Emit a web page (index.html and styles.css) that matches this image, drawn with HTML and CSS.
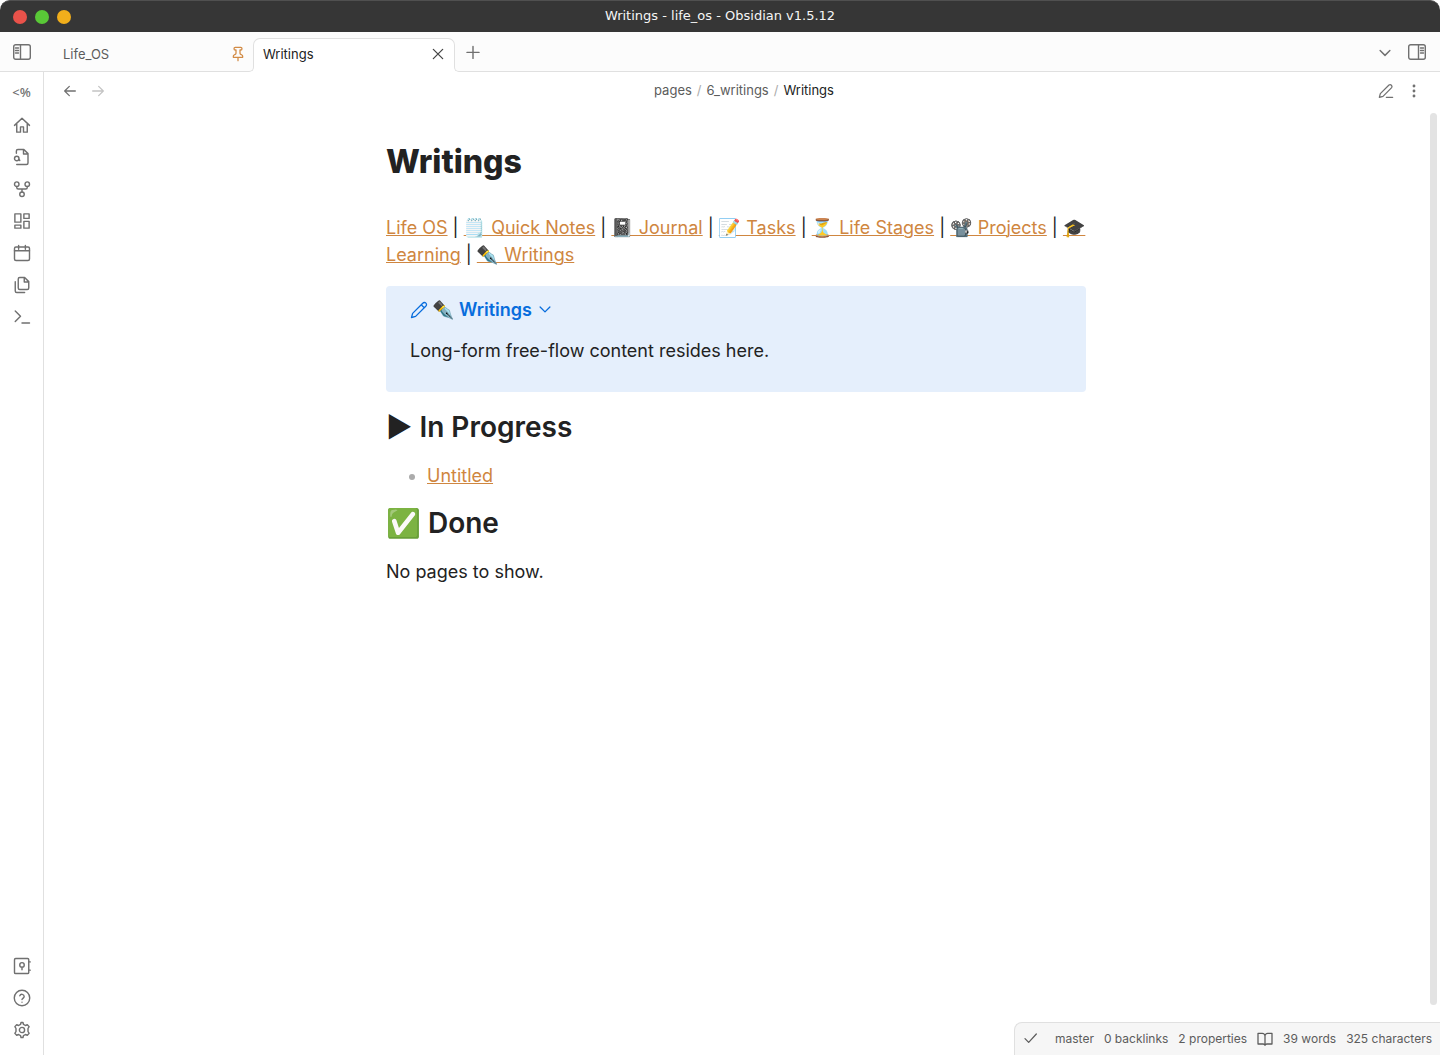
FILE: index.html
```html
<!DOCTYPE html>
<html lang="en">
<head>
<meta charset="utf-8">
<meta name="viewport" content="width=device-width, initial-scale=1">
<title>Writings - life_os - Obsidian v1.5.12</title>
<link rel="stylesheet" href="styles.css">
</head>
<body>
<div class="window">
  <header class="titlebar">
    <div class="window-buttons">
      <button class="dot dot-close" aria-label="Close"></button>
      <button class="dot dot-min" aria-label="Minimize"></button>
      <button class="dot dot-max" aria-label="Maximize"></button>
    </div>
    <div class="window-title">Writings - life_os - Obsidian v1.5.12</div>
  </header>

  <div class="tabbar">
    <button class="icon-button toggle-left" aria-label="Toggle left sidebar">
      <svg class="icon-panel" viewBox="0 0 18 16"><rect x=".7" y=".7" width="16.6" height="14.6" rx="2"/><path d="M7.500 1v14M2.500 4H5.500M2.500 6.500H5.500M2.500 9H5.500"/></svg>
    </button>
    <div class="tabs" role="tablist">
      <div class="tab" role="tab">
        <span class="tab-title">Life_OS</span>
        <button class="icon-button pin" aria-label="Unpin">
          <svg class="icon-small" viewBox="0 0 24 24"><path d="M12 17v5M5 17h14v-1.760a2 2 0 0 0-1.110-1.790l-1.780-.9A2 2 0 0 1 15 10.760V6h1a2 2 0 0 0 0-4H8a2 2 0 0 0 0 4h1v4.760a2 2 0 0 1-1.110 1.790l-1.780.9A2 2 0 0 0 5 15.240Z"/></svg>
        </button>
      </div>
      <div class="tab active" role="tab" aria-selected="true">
        <span class="tab-title">Writings</span>
        <button class="icon-button close" aria-label="Close tab">
          <svg class="icon-small" viewBox="0 0 24 24"><path d="M19 5 5 19M5 5l14 14"/></svg>
        </button>
      </div>
    </div>
    <button class="icon-button new-tab" aria-label="New tab">
      <svg class="icon" viewBox="0 0 24 24"><path d="M12 4.500v16M4 12.500h16"/></svg>
    </button>
    <div class="tabbar-end">
      <button class="icon-button" aria-label="Tab list">
        <svg class="icon" viewBox="0 0 24 24"><path d="m5.500 10 6.500 6.500 6.500-6.500"/></svg>
      </button>
      <button class="icon-button" aria-label="Toggle right sidebar">
        <svg class="icon-panel" viewBox="0 0 18 16"><rect x=".7" y=".7" width="16.6" height="14.6" rx="2"/><path d="M10.500 1v14M12.500 4H15.500M12.500 6.500H15.500M12.500 9H15.500"/></svg>
      </button>
    </div>
  </div>

  <div class="workspace">
    <nav class="ribbon" aria-label="Ribbon">
      <div class="ribbon-group">
        <button class="icon-button templater" aria-label="Templater">&lt;%</button>
        <button class="icon-button" aria-label="Home"><svg class="icon" viewBox="0 0 24 24"><path d="M2 12.500 12 3l10 9.500M5 11v10.500h5v-7h4v7h5V11"/></svg></button>
        <button class="icon-button" aria-label="Quick switcher"><svg class="icon" viewBox="0 0 24 24"><path d="M14 2v6h6M4.500 7V4a2 2 0 0 1 2-2H14.500L20 7.500V20a2 2 0 0 1-2 2H5M9 16.500 7.500 15"/><circle cx="5" cy="14" r="3"/></svg></button>
        <button class="icon-button" aria-label="Graph view"><svg class="icon" viewBox="0 0 24 24"><circle cx="12" cy="19" r="3"/><circle cx="5" cy="5.500" r="3"/><circle cx="19" cy="5.500" r="3"/><path d="M19 8.500v1.500a2 2 0 0 1-2 2H7a2 2 0 0 1-2-2V8.500M12 12v4"/></svg></button>
        <button class="icon-button" aria-label="Canvas"><svg class="icon" viewBox="0 0 24 24"><path d="M2.500 2.500h8v11h-8ZM14.500 2.500h7v6h-7ZM14.500 12.500h7v9h-7ZM2.500 17.500h8v4h-8Z"/></svg></button>
        <button class="icon-button" aria-label="Daily note"><svg class="icon" viewBox="0 0 24 24"><rect x="2" y="4" width="20" height="18" rx="2"/><path d="M7.500 2v5M16.500 2v5M2 9h20"/></svg></button>
        <button class="icon-button" aria-label="Insert template"><svg class="icon" viewBox="0 0 24 24"><path d="M15.500 2H9a2 2 0 0 0-2 2v12a2 2 0 0 0 2 2h10a2 2 0 0 0 2-2V7.500ZM15 2v6h6M3 7.500V20a2 2 0 0 0 2 2h10.500"/></svg></button>
        <button class="icon-button" aria-label="Command palette"><svg class="icon" viewBox="0 0 24 24"><path d="m3 18 7-7-7-7M12 20h10"/></svg></button>
      </div>
      <div class="ribbon-group">
        <button class="icon-button" aria-label="Open vault"><svg class="icon" viewBox="0 0 24 24"><rect x="2" y="2" width="19" height="20" rx="1.500"/><circle cx="12" cy="10.500" r="3"/><path d="M12 13.500V17M21 6.500h2M21 17.500h2"/></svg></button>
        <button class="icon-button" aria-label="Help"><svg class="icon" viewBox="0 0 24 24"><circle cx="12" cy="12" r="10.300"/><path d="M9.100 9a3 3 0 0 1 5.800 1c0 2-2.900 2.700-2.900 4M12 17.500h.01"/></svg></button>
        <button class="icon-button" aria-label="Settings"><svg class="icon" viewBox="0 0 24 24"><path d="M14 4.600 13.300 2h-2.600L10 4.600 7.500 6 4.900 5 2.500 7.500 4 10v4l-1.500 2.500L4.900 19l2.600-1 2.500 1.400.7 2.600h2.600l.7-2.600 2.500-1.400 2.600 1 2.400-2.500L20 14v-4l1.500-2.500L19.100 5l-2.600 1Z"/><circle cx="12" cy="12" r="3.500"/></svg></button>
      </div>
    </nav>

    <main class="leaf">
      <div class="view-header">
        <div class="view-nav">
          <button class="icon-button" aria-label="Back"><svg class="icon-small" viewBox="0 0 24 24"><path d="m11 19-7-7 7-7M20 12H4"/></svg></button>
          <button class="icon-button disabled" aria-label="Forward"><svg class="icon-small" viewBox="0 0 24 24"><path d="m13 5 7 7-7 7M4 12h16"/></svg></button>
        </div>
        <div class="breadcrumb">
          <span>pages</span><span class="slash">/</span><span>6_writings</span><span class="slash">/</span><span class="current">Writings</span>
        </div>
        <div class="view-actions">
          <button class="icon-button" aria-label="Edit"><svg class="icon-small" viewBox="0 0 24 24"><path d="M12.500 21.500H22M16.500 3a2.900 2.900 0 0 1 4 4L7.500 20 2 21.500 3.500 16Z"/></svg></button>
          <button class="icon-button" aria-label="More options"><svg class="icon-small dots" viewBox="0 0 24 24"><circle cx="12" cy="4.500" r="1.200"/><circle cx="12" cy="12" r="1.200"/><circle cx="12" cy="19.500" r="1.200"/></svg></button>
        </div>
      </div>

      <div class="scroller">
        <article class="note">
          <h1>Writings</h1>
          <p class="links"><a href="#">Life OS</a> | <a href="#">🗒️ Quick Notes</a> | <a href="#">📓 Journal</a> | <a href="#">📝 Tasks</a> | <a href="#">⏳ Life Stages</a> | <a href="#">📽️ Projects</a> | <a href="#">🎓 Learning</a> | <a href="#">✒️ Writings</a></p>
          <section class="callout">
            <div class="callout-title">
              <svg class="icon" viewBox="0 0 24 24"><path d="M17 3a2.850 2.830 0 1 1 4 4L7.500 20.500 2 22l1.500-5.500ZM15 5l4 4"/></svg>
              <span>✒️ Writings</span>
              <svg class="icon fold" viewBox="0 0 24 24"><path d="m5.500 8 6.500 6.500 6.500-6.500"/></svg>
            </div>
            <p>Long-form free-flow content resides here.</p>
          </section>
          <h2>▶ In Progress</h2>
          <ul><li><a href="#">Untitled</a></li></ul>
          <h2>✅ Done</h2>
          <p>No pages to show.</p>
        </article>
        <div class="scrollbar"></div>
      </div>

      <footer class="statusbar">
        <svg class="icon-small check" viewBox="0 0 24 24"><path d="M20 4.500 8.500 17 3 11.500"/></svg>
        <span>master</span>
        <span>0 backlinks</span>
        <span>2 properties</span>
        <svg class="icon-small book" viewBox="0 0 24 24"><path d="M1.500 3.500H8a4 4 0 0 1 4 4v14a3 3 0 0 0-3-2H1.500ZM22.500 3.500H16a4 4 0 0 0-4 4v14a3 3 0 0 1 3-2h7.500Z"/></svg>
        <span>39 words</span>
        <span>325 characters</span>
      </footer>
    </main>
  </div>
</div>
</body>
</html>
```

FILE: styles.css
```css
*,
*::before,
*::after {
  box-sizing: border-box;
}

body {
  margin: 0;
  background: #fff;
  color: #222;
  font-family: Inter, "Noto Color Emoji", sans-serif;
  font-size: 13px;
}

button {
  border: 0;
  padding: 0;
  background: none;
  color: inherit;
  font: inherit;
}

svg {
  display: block;
  flex: none;
  fill: none;
  stroke: currentColor;
  stroke-width: 1.9px;
  stroke-linecap: round;
  stroke-linejoin: round;
}

.window {
  display: flex;
  flex-direction: column;
  height: 100vh;
}

.titlebar {
  display: grid;
  grid-template-columns: 1fr auto 1fr;
  align-items: center;
  height: 32px;
  padding: 0 13px;
  border-top: 1px solid #505050;
  border-radius: 10px 10px 0 0;
  background: #363636;
}

.window-buttons {
  display: flex;
  gap: 8px;
}

.dot {
  width: 14px;
  height: 14px;
  border-radius: 50%;
}

.dot-close { background: #e9524a; }
.dot-min { background: #59c837; }
.dot-max { background: #f1ae1b; }

.window-title {
  padding-bottom: 2px;
  color: #f5f5f5;
  font-family: "DejaVu Sans", sans-serif;
  font-size: 13px;
  line-height: 20px;
}

.icon { width: 18px; height: 18px; }
.icon-small { width: 16px; height: 16px; }
.icon-panel { width: 18px; height: 16px; stroke-width: 1.4px; }

.icon-button {
  display: flex;
  flex: none;
  align-items: center;
  justify-content: center;
  color: #707070;
}

.tabbar {
  display: flex;
  align-items: center;
  height: 40px;
  border-bottom: 1px solid #e0e0e0;
  background: #fcfcfc;
}

.toggle-left {
  width: 44px;
}

.tabs {
  display: flex;
  align-self: flex-end;
  height: 34px;
  margin: 0 0 -1px 9px;
}

.tab {
  display: flex;
  align-items: center;
  justify-content: space-between;
  width: 200px;
  padding: 0 7px 2px 10px;
  color: #5c5c5c;
}

.tab.active {
  position: relative;
  width: 202px;
  padding: 0 8px 3px 9px;
  border: 1px solid #e0e0e0;
  border-bottom: 0;
  border-radius: 7px 7px 0 0;
  background: #fff;
  color: #222;
}

/* Curved feet that join the active tab to the bar's bottom line */
.tab.active::before,
.tab.active::after {
  content: "";
  position: absolute;
  bottom: 0;
  width: 7px;
  height: 7px;
  border-bottom: 1px solid #e0e0e0;
  background: #fcfcfc;
}

.tab.active::before {
  left: -7px;
  border-right: 1px solid #e0e0e0;
  border-bottom-right-radius: 5px;
  box-shadow: 2px 2px 0 #fff;
}

.tab.active::after {
  right: -7px;
  border-left: 1px solid #e0e0e0;
  border-bottom-left-radius: 5px;
  box-shadow: -2px 2px 0 #fff;
}

.tab-title {
  line-height: 20px;
}

.pin { color: #d28b45; }
.close { color: #444; }

.new-tab {
  width: 36px;
}

.tabbar-end {
  display: flex;
  gap: 14px;
  margin-left: auto;
  padding-right: 14px;
}

.workspace {
  display: flex;
  flex: 1;
  min-height: 0;
}

.ribbon {
  display: flex;
  flex: none;
  flex-direction: column;
  justify-content: space-between;
  width: 44px;
  padding: 5px 0 9px;
  border-right: 1px solid #e0e0e0;
}

.ribbon .icon-button {
  width: 43px;
  height: 32px;
}

.ribbon .templater {
  padding-bottom: 2px;
  font-family: "Noto Sans", sans-serif;
  font-size: 13px;
  font-weight: 500;
}

.leaf {
  position: relative;
  display: flex;
  flex: 1;
  flex-direction: column;
  min-width: 0;
}

.view-header {
  display: grid;
  grid-template-columns: 1fr auto 1fr;
  align-items: center;
  height: 38px;
  padding: 0 18px;
}

.view-nav,
.view-actions {
  display: flex;
  gap: 12px;
}

.view-actions {
  justify-content: flex-end;
}

.disabled { color: #c4c4c4; }

.dots { fill: currentColor; }

.breadcrumb {
  display: flex;
  gap: 5px;
  padding: 0 0 2px 4px;
  color: #5c5c5c;
  line-height: 20px;
}

.slash { color: #ababab; }
.current { color: #222; }

.scroller {
  display: flex;
  flex: 1;
  min-height: 0;
  padding: 3px 3px 50px 0;
}

.note {
  flex: 1;
  max-width: 700px;
  margin: 0 auto;
  padding-top: 29px;
  font-size: 18px;
  line-height: 27px;
}

.scrollbar {
  flex: none;
  width: 7px;
  margin-left: 2px;
  border-radius: 4px;
  background: #e3e3e3;
}

.note h1 {
  margin: 0 0 32px;
  font-size: 32px;
  font-weight: 800;
  line-height: 40px;
}

.note h2 {
  margin: 0 0 17px;
  font-size: 28px;
  font-weight: 600;
  line-height: 36px;
}

.note p {
  margin: 0;
}

.note a {
  color: #cf8640;
  text-decoration-thickness: 1px;
}

.callout {
  margin: 18px 0 17px;
  padding: 10px 24px 28px;
  border-radius: 4px;
  background: #e5effc;
}

.callout-title {
  display: flex;
  align-items: center;
  gap: 4px;
  margin-bottom: 14px;
  color: #086ddd;
  font-weight: 600;
}

.callout-title svg {
  stroke-width: 1.75px;
}

.note ul {
  margin: 0 0 16px;
  padding-left: 41px;
}

.note li::marker {
  color: #ababab;
}

.statusbar {
  position: absolute;
  right: 0;
  bottom: 0;
  display: flex;
  align-items: center;
  gap: 10px;
  height: 33px;
  padding: 0 8px;
  border: 1px solid #e0e0e0;
  border-width: 1px 0 0 1px;
  border-radius: 8px 0 0 0;
  background: #f6f6f6;
  color: #5c5c5c;
  font-size: 12px;
  line-height: 16px;
}

.check {
  margin-right: 6px;
}
```
